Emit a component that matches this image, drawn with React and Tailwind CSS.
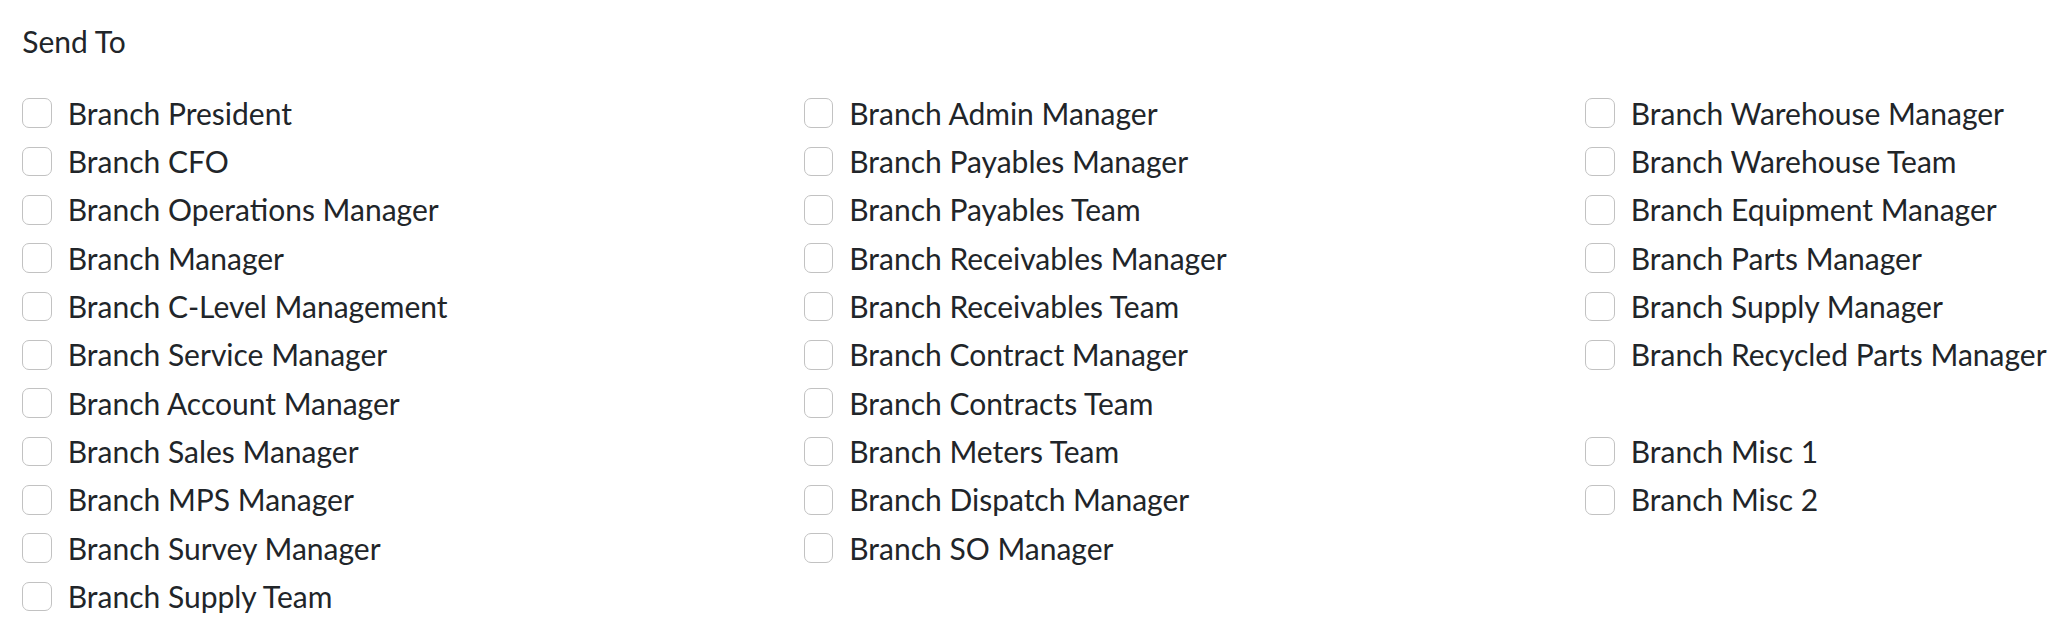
const col1 = [
  'Branch President',
  'Branch CFO',
  'Branch Operations Manager',
  'Branch Manager',
  'Branch C-Level Management',
  'Branch Service Manager',
  'Branch Account Manager',
  'Branch Sales Manager',
  'Branch MPS Manager',
  'Branch Survey Manager',
  'Branch Supply Team',
];
const col2 = [
  'Branch Admin Manager',
  'Branch Payables Manager',
  'Branch Payables Team',
  'Branch Receivables Manager',
  'Branch Receivables Team',
  'Branch Contract Manager',
  'Branch Contracts Team',
  'Branch Meters Team',
  'Branch Dispatch Manager',
  'Branch SO Manager',
];
const col3 = [
  'Branch Warehouse Manager',
  'Branch Warehouse Team',
  'Branch Equipment Manager',
  'Branch Parts Manager',
  'Branch Supply Manager',
  'Branch Recycled Parts Manager',
  null,
  'Branch Misc 1',
  'Branch Misc 2',
];

function Item({ label }) {
  if (!label) return <div className="h-[48.33px]"></div>;
  return (
    <label className="flex items-center gap-[16px] h-[48.33px] cursor-pointer">
      <input
        type="checkbox"
        className="appearance-none shrink-0 w-[29.5px] h-[29.5px] border-[1.3px] border-[#c2c2c2] rounded-[7px] bg-white"
      />
      <span className="whitespace-nowrap">{label}</span>
    </label>
  );
}

function Column({ items, last }) {
  return (
    <div className={last ? 'flex flex-col' : 'flex flex-col w-[781.5px] shrink-0'}>
      {items.map((l, i) => (
        <Item key={i} label={l} />
      ))}
    </div>
  );
}

export default function App() {
  return (
    <div
      className="min-h-[628px] bg-white text-[#212529] text-[30px] pl-[22.3px] pt-[17px]"
      style={{ fontFamily: 'Lato, "Open Sans", sans-serif' }}
    >
      <div className="h-[48px] flex items-center mb-[24px]">Send To</div>
      <div className="flex">
        <Column items={col1} />
        <Column items={col2} />
        <Column items={col3} last />
      </div>
    </div>
  );
}
